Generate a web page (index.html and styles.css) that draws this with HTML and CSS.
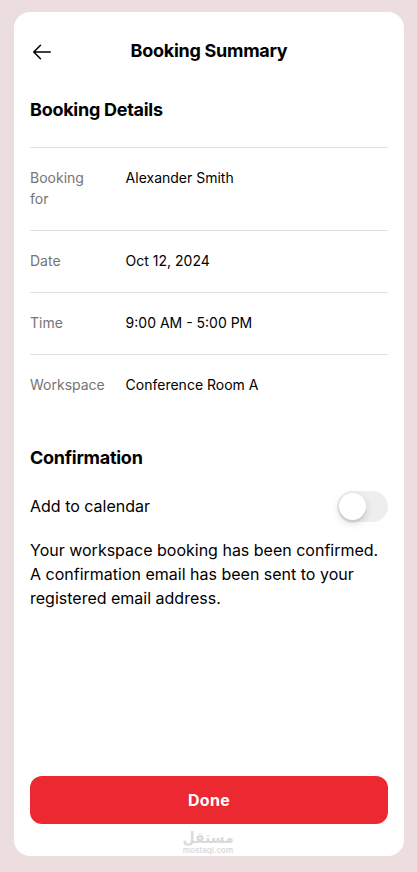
FILE: index.html
```html
<!DOCTYPE html>
<html lang="en">
<head>
<meta charset="utf-8">
<meta name="viewport" content="width=device-width, initial-scale=1">
<title>Booking Summary</title>
<link rel="stylesheet" href="styles.css">
</head>
<body>
<main class="card">
  <header class="header">
    <button class="back" aria-label="Back">
      <svg width="24" height="24" viewBox="0 0 256 256" fill="currentColor"><path d="M224,128a8,8,0,0,1-8,8H59.31l58.35,58.34a8,8,0,0,1-11.32,11.32l-72-72a8,8,0,0,1,0-11.32l72-72a8,8,0,0,1,11.32,11.32L59.31,120H216A8,8,0,0,1,224,128Z"/></svg>
    </button>
    <h1 class="title">Booking Summary</h1>
  </header>
  <h2 class="section-title">Booking Details</h2>
  <dl class="details">
    <div class="row"><dt>Booking for</dt><dd>Alexander Smith</dd></div>
    <div class="row"><dt>Date</dt><dd>Oct 12, 2024</dd></div>
    <div class="row"><dt>Time</dt><dd>9:00 AM - 5:00 PM</dd></div>
    <div class="row"><dt>Workspace</dt><dd>Conference Room A</dd></div>
  </dl>
  <h2 class="section-title">Confirmation</h2>
  <label class="calendar">
    <span>Add to calendar</span>
    <span class="toggle"><span class="knob"></span></span>
  </label>
  <p class="message">Your workspace booking has been confirmed. A confirmation email has been sent to your registered email address.</p>
  <button class="done">Done</button>
  <footer class="brand">
    <span class="brand-name" lang="ar" dir="rtl">مستقل</span>
    <span class="brand-url">mostaql.com</span>
  </footer>
</main>
</body>
</html>
```

FILE: styles.css
```css
* { box-sizing: border-box; }
body {
  margin: 0;
  height: 872px;
  padding: 12px 13px 16px 14px;
  background: #ecddde;
  color: #000;
  font-family: Inter, "Liberation Sans", sans-serif;
}
h1, h2, p, dl, dd { margin: 0; }
button { border: 0; padding: 0; font-family: inherit; }
.card {
  display: flex;
  flex-direction: column;
  height: 844px;
  background: #fff;
  border-radius: 16px;
  overflow: hidden;
}
.header {
  display: flex;
  align-items: center;
  padding: 16px 16px 8px;
}
.back {
  display: flex;
  align-items: center;
  width: 48px;
  height: 48px;
  background: none;
  color: #000;
}
.title {
  flex: 1;
  padding: 0 48px 2px 0;
  text-align: center;
}
.title, .section-title {
  font-size: 18px;
  font-weight: 700;
  line-height: 22.5px;
  letter-spacing: -0.27px;
}
.section-title { padding: 15px 16px 9px; }
.details { padding: 16px; }
.row {
  display: grid;
  grid-template-columns: 20% 1fr;
  column-gap: 24px;
  padding: 19px 0 21px;
  border-top: 1px solid #e0e0e0;
  font-size: 14px;
  line-height: 21px;
}
.row dt { color: #757575; }
.calendar {
  display: flex;
  align-items: center;
  justify-content: space-between;
  height: 56px;
  padding: 0 16px;
  font-size: 16px;
  line-height: 24px;
}
.toggle {
  width: 51px;
  height: 31px;
  padding: 2px;
  border-radius: 16px;
  background: #eee;
}
.knob {
  display: block;
  width: 27px;
  height: 27px;
  border-radius: 50%;
  background: #fff;
  box-shadow: 0 3px 8px rgba(0, 0, 0, .15), 0 3px 1px rgba(0, 0, 0, .06);
}
.message {
  padding: 4px 16px 12px;
  font-size: 16px;
  line-height: 24px;
}
.done {
  height: 48px;
  margin: auto 16px 0;
  border-radius: 12px;
  background: #ec2831;
  color: #fff;
  font-size: 16px;
  font-weight: 700;
  line-height: 24px;
  letter-spacing: .24px;
}
.brand {
  display: flex;
  flex-direction: column;
  align-items: center;
  height: 32px;
  padding: 5px 2px 0 0;
  color: #dadada;
}
.brand-name {
  height: 16px;
  font: 700 14px/16px "DejaVu Sans", sans-serif;
  transform: scaleY(1.15);
}
.brand-url {
  height: 10px;
  font: 600 8px/10px Inter, sans-serif;
}
```
